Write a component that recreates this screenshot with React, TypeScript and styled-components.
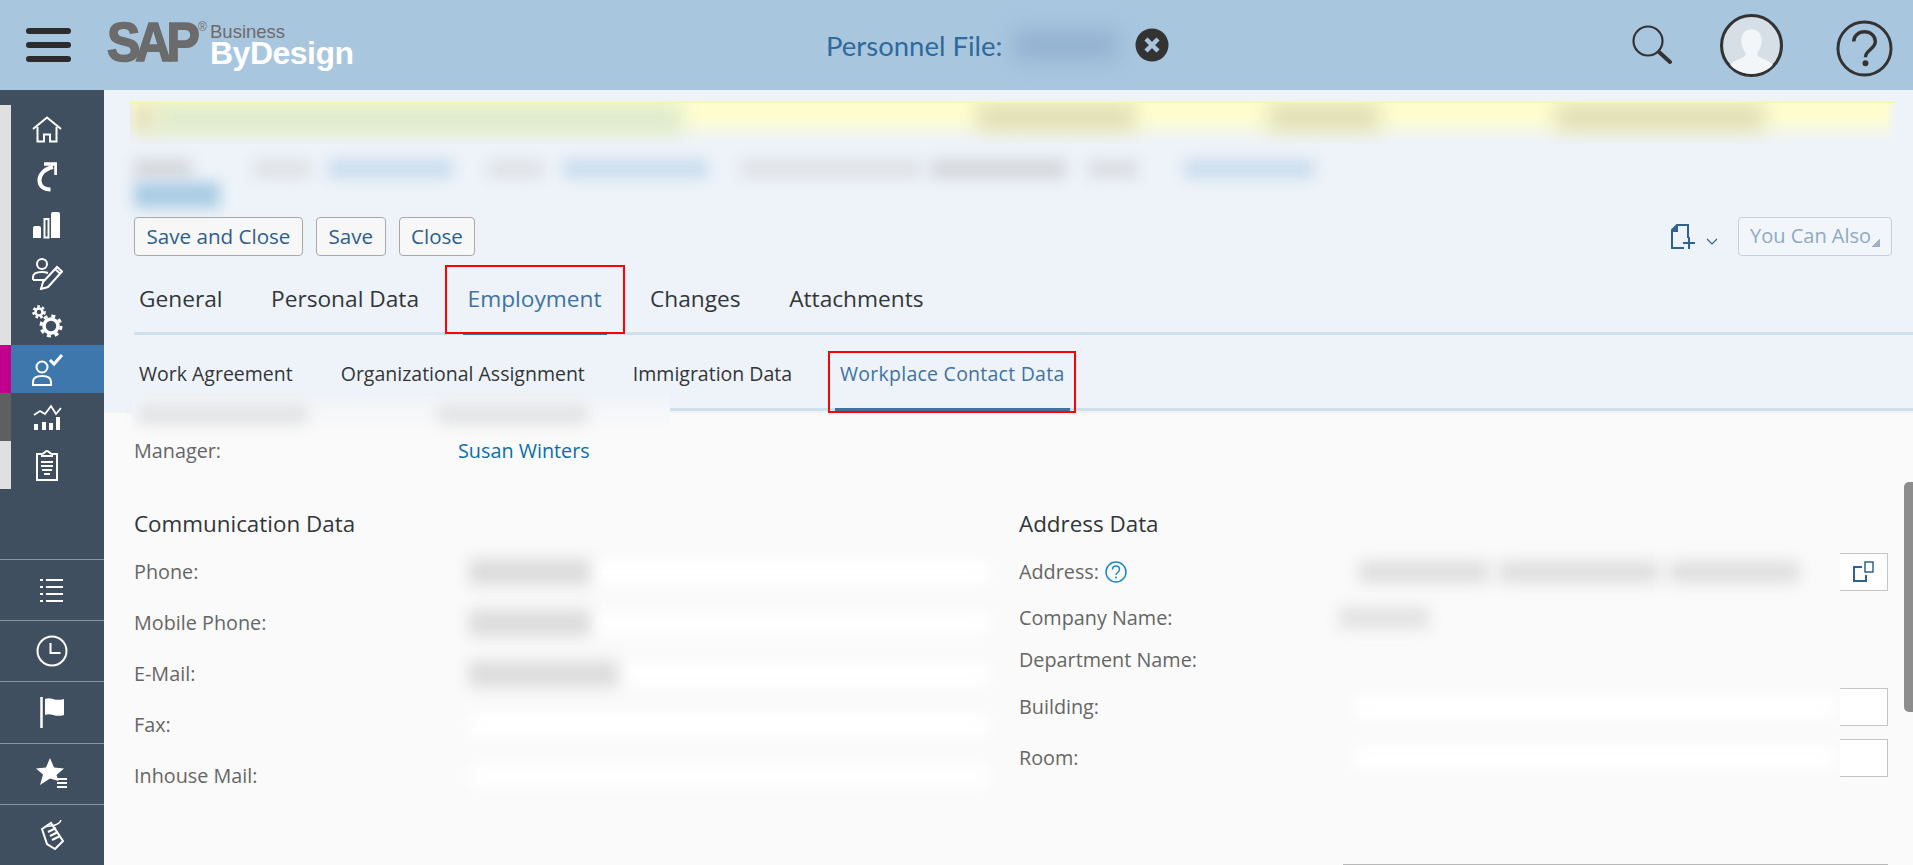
import React from 'react';
import styled, { createGlobalStyle } from 'styled-components';

const GlobalStyle = createGlobalStyle`
  html, body {
    margin: 0;
    padding: 0;
    height: 100%;
    overflow: hidden;
    background: #fafafa;
    font-family: 'Open Sans', 'Noto Sans', sans-serif;
  }
`;

const Icon = ({ w, h, children }: { w: number; h: number; children: React.ReactNode }) => (
  <svg width={w} height={h} viewBox={`0 0 ${w} ${h}`} fill="none" stroke="#fff" strokeWidth={2}>
    {children}
  </svg>
);

const topNav = [
  {
    rail: '#e0e0e0',
    icon: (
      <Icon w={30} h={27}>
        <path d="M1 13 15 1.5 29 13" />
        <path d="M5.500 11v14.500H12v-7h6v7h6.500V11" />
      </Icon>
    ),
  },
  {
    rail: '#e0e0e0',
    icon: (
      <Icon w={20} h={30}>
        <path d="M16 5C7 7 2 13 2.500 19c.5 5.500 5 8.500 11 8.500" strokeWidth={4} />
        <path d="M7 2h12v11" strokeWidth={3.500} />
      </Icon>
    ),
  },
  {
    rail: '#e0e0e0',
    icon: (
      <Icon w={28} h={28}>
        <path d="M0 27V17q0-2 2-2h4q2 0 2 2v10zM18 27V3q0-2 2-2h5q2 0 2 2v24z" fill="#fff" stroke="none" />
        <rect x="11.500" y="8" width="4" height="18.500" strokeWidth={2} />
      </Icon>
    ),
  },
  {
    rail: '#e0e0e0',
    icon: (
      <Icon w={31} h={33}>
        <circle cx="10" cy="7" r="5" />
        <path d="M1 23v-3c0-3 3-5 9-5 2 0 4 .3 6 1M1 23h12" />
        <path d="M9 32l2-7L25 10l5 4.500L16 30zM23 12l5 4.500" />
      </Icon>
    ),
  },
  {
    rail: '#e0e0e0',
    icon: (
      <Icon w={31} h={33}>
        <circle cx="7" cy="7" r="3.500" strokeWidth={2.500} />
        <circle cx="7" cy="7" r="5.500" strokeWidth={2.500} strokeDasharray="2.600 2.100" />
        <circle cx="19" cy="21" r="7" strokeWidth={3.500} />
        <circle cx="19" cy="21" r="10" strokeWidth={3} strokeDasharray="4 3.850" />
      </Icon>
    ),
  },
  {
    rail: '#c0008c',
    active: true,
    icon: (
      <Icon w={31} h={33}>
        <circle cx="10" cy="14" r="5.500" />
        <path d="M1 32v-3c0-4 3-6 9-6s9 2 9 6v3z" />
        <path d="M18 7l4 4 8-9" strokeWidth={3} />
      </Icon>
    ),
  },
  {
    rail: '#5f5f5f',
    icon: (
      <Icon w={29} h={27}>
        <path d="M1 11l6-4 5 3 6-8 5 8 5-6" strokeWidth={1.800} />
        <path d="M1 20h4v6H1zM9 18h4v8H9zM16 19h4v7h-4zM23 13h4v13h-4z" fill="#fff" stroke="none" />
      </Icon>
    ),
  },
  {
    rail: '#e0e0e0',
    icon: (
      <Icon w={24} h={31}>
        <path d="M7 4H2v26h20V4h-5" />
        <path d="M7 6V4c2 0 3-3 5-3s3 3 5 3v2z" />
        <path d="M6 12h12M6 16h12M7 20h10M9 24h6" />
      </Icon>
    ),
  },
];

const bottomNav = [
  <Icon w={24} h={25} key="list">
    <path d="M6 2h17M6 9h17M6 16h17M6 23h17" strokeWidth={2.200} />
    <path d="M0 2h3M0 9h3M0 16h3M0 23h3" strokeWidth={2.200} />
  </Icon>,
  <Icon w={32} h={32} key="clock">
    <circle cx="16" cy="16" r="14.500" strokeWidth={2} />
    <path d="M14.500 8v10h10" strokeWidth={2} />
  </Icon>,
  <Icon w={25} h={31} key="flag">
    <path d="M1.500 0v31" strokeWidth={2.500} />
    <path d="M5 2c6-3 9 3 19 0v16c-9 3-13-3-19 0z" fill="#fff" stroke="none" />
  </Icon>,
  <Icon w={32} h={31} key="star">
    <path d="M14 0l4 9.500 10 1-7.500 6.500 2 6-8.500-2.500L4 27l3-10.500L0 10.500l10-1z" fill="#fff" stroke="none" />
    <path d="M21 21h10M21 25h10M21 29h10" strokeWidth={2} />
  </Icon>,
  <Icon w={24} h={33} key="tag">
    <path d="M2 11l9-6 12 18-8 8-8-5z" strokeWidth={2} />
    <path d="M8 14l8-4M10 18l8-4M12 22l8-4" strokeWidth={2} />
    <path d="M5 9c4-2 6 0 10-2 3-1 5-2 6-5" strokeWidth={1.500} />
  </Icon>,
];

const App = () => {
  return (
    <>
      <GlobalStyle />
      <Page>
        <Header>
          <Hamburger>
            <span />
            <span />
            <span />
          </Hamburger>
          <Logo>
            <LogoSap>SAP</LogoSap>
            <LogoReg>®</LogoReg>
            <LogoWords>
              <LogoBusiness>Business</LogoBusiness>
              <LogoByDesign>ByDesign</LogoByDesign>
            </LogoWords>
          </Logo>
          <Title>
            Personnel File:
            <Smudge $w={104} $h={32} $c="#94b3d2" $blur={10} $ml={12} />
            <CloseCircle>
              <svg width="34" height="34" viewBox="0 0 34 34">
                <circle cx="17" cy="17" r="16.500" fill="#333" />
                <path d="M11 11l12 12M23 11 11 23" stroke="#a9c6df" strokeWidth="4.500" />
              </svg>
            </CloseCircle>
          </Title>
          <HeaderIcons>
            <SearchIcon width="40" height="40" viewBox="0 0 40 40" fill="none" stroke="#333">
              <circle cx="16" cy="16" r="14.500" strokeWidth="2.200" />
              <path d="M27 27l11 10" strokeWidth="4" strokeLinecap="round" />
            </SearchIcon>
            <Avatar>
              <svg width="63" height="63" viewBox="0 0 62 62">
                <circle cx="31" cy="31" r="29.500" fill="#d6dfe6" stroke="#333" strokeWidth="3" />
                <path
                  d="M31 15c6 0 10 4 10 11 0 5-2 9-4 12v3c3 3 11 4 15 9-5 6-13 9-21 9s-16-3-21-9c4-5 12-6 15-9v-3c-2-3-4-7-4-12 0-7 4-11 10-11z"
                  fill="#f3f6f9"
                />
              </svg>
            </Avatar>
            <HelpCircle width="57" height="57" viewBox="0 0 58 58" fill="none" stroke="#333">
              <circle cx="29" cy="29" r="27" strokeWidth="3" />
              <path d="M18 22c0-6 5-10 11-10s11 4 11 10c0 8-10 8-10 16" strokeWidth="3.500" />
              <circle cx="30" cy="44" r="3" fill="#333" stroke="none" />
            </HelpCircle>
          </HeaderIcons>
        </Header>
        <Body>
          <Sidebar>
            <TopNav>
              {topNav.map((item, i) => (
                <NavItem key={i} $rail={item.rail} $active={item.active}>
                  {item.icon}
                </NavItem>
              ))}
            </TopNav>
            <BottomNav>
              {bottomNav.map((icon, i) => (
                <BottomItem key={i}>{icon}</BottomItem>
              ))}
            </BottomNav>
          </Sidebar>
          <Main>
            <TopSection>
              <Banner>
                <Smudge $w={22} $h={28} $c="#e0ddbb" $blur={9} />
                <Smudge $w={525} $h={30} $c="#dde9cd" $blur={10} />
                <Smudge $w={158} $h={26} $c="#dedcb4" $blur={10} $ml={296} />
                <Smudge $w={110} $h={26} $c="#dedcb4" $blur={10} $ml={134} />
                <Smudge $w={208} $h={26} $c="#dedcb4" $blur={10} $ml={177} />
              </Banner>
              <InfoRow>
                <Smudge $w={58} $h={20} $c="#d6d8dc" $blur={7} />
                <Smudge $w={56} $h={18} $c="#dfe1e5" $blur={7} $ml={62} />
                <Smudge $w={125} $h={20} $c="#cbdeee" $blur={7} $ml={18} />
                <Smudge $w={55} $h={18} $c="#dfe1e5" $blur={7} $ml={35} />
                <Smudge $w={145} $h={20} $c="#cbdeee" $blur={7} $ml={20} />
                <Smudge $w={180} $h={18} $c="#dfe1e5" $blur={7} $ml={33} />
                <Smudge $w={135} $h={20} $c="#d6d8dc" $blur={7} $ml={10} />
                <Smudge $w={50} $h={18} $c="#dbdde1" $blur={7} $ml={22} />
                <Smudge $w={130} $h={20} $c="#cbdeee" $blur={7} $ml={46} />
              </InfoRow>
              <Smudge $w={86} $h={26} $c="#a9cce4" $blur={7} />
              <Toolbar>
                <ToolButton>Save and Close</ToolButton>
                <ToolButton>Save</ToolButton>
                <ToolButton>Close</ToolButton>
                <ToolbarRight>
                  <svg width="26" height="26" viewBox="0 0 26 26" fill="none" stroke="#2f6291" strokeWidth="2">
                    <path d="M14 24H2V6l5-5h11v13" />
                    <path d="M2 7h5V2" fill="#2f6291" />
                    <path d="M13 19h12M19 13v12" />
                  </svg>
                  <svg width="12" height="7" viewBox="0 0 12 7" fill="none" stroke="#2f6291" strokeWidth="1.200">
                    <path d="M1 1l5 5 5-5" />
                  </svg>
                  <AlsoButton>You Can Also</AlsoButton>
                </ToolbarRight>
              </Toolbar>
              <Tabs>
                <Tab>General</Tab>
                <Tab>Personal Data</Tab>
                <Tab $active $marked>
                  Employment
                </Tab>
                <Tab>Changes</Tab>
                <Tab>Attachments</Tab>
              </Tabs>
              <SubTabs>
                <SubTab>Work Agreement</SubTab>
                <SubTab>Organizational Assignment</SubTab>
                <SubTab>Immigration Data</SubTab>
                <SubTab $active $marked>
                  Workplace Contact Data
                </SubTab>
              </SubTabs>
              <Redaction>
                <Smudge $w={170} $h={20} $c="#e3e4e6" $blur={7} $ml={6} />
                <Smudge $w={150} $h={20} $c="#e3e4e6" $blur={7} $ml={130} />
              </Redaction>
            </TopSection>
            <FormArea>
              <ManagerRow>
                <FieldLabel>Manager:</FieldLabel>
                <ManagerLink>Susan Winters</ManagerLink>
              </ManagerRow>
              <Columns>
                <Column>
                  <SectionTitle>Communication Data</SectionTitle>
                  <Row>
                    <FieldLabel>Phone:</FieldLabel>
                    <BlurField $text={122} />
                  </Row>
                  <Row>
                    <FieldLabel>Mobile Phone:</FieldLabel>
                    <BlurField $text={122} />
                  </Row>
                  <Row>
                    <FieldLabel>E-Mail:</FieldLabel>
                    <BlurField $text={150} />
                  </Row>
                  <Row>
                    <FieldLabel>Fax:</FieldLabel>
                    <BlurField />
                  </Row>
                  <Row>
                    <FieldLabel>Inhouse Mail:</FieldLabel>
                    <BlurField />
                  </Row>
                </Column>
                <Column>
                  <SectionTitle>Address Data</SectionTitle>
                  <Row>
                    <FieldLabel>
                      Address:
                      <HelpIcon>
                        <svg width="22" height="22" viewBox="0 0 22 22" fill="none" stroke="#1b87c9">
                          <circle cx="11" cy="11" r="10" strokeWidth="1.500" />
                          <path d="M7.500 8.500c0-2 1.500-3.500 3.500-3.500s3.500 1.500 3.500 3.500c0 3-3.500 3-3.500 5.500" strokeWidth="1.500" />
                          <circle cx="11" cy="16.500" r="1" fill="#1b87c9" stroke="none" />
                        </svg>
                      </HelpIcon>
                    </FieldLabel>
                    <InputField>
                      <Smudge $w={130} $h={20} $c="#dcdcdc" $blur={8} $ml={20} />
                      <Smudge $w={160} $h={20} $c="#dcdcdc" $blur={8} $ml={10} />
                      <Smudge $w={130} $h={20} $c="#dcdcdc" $blur={8} $ml={10} />
                      <InputEnd>
                        <svg width="21" height="21" viewBox="0 0 21 21" fill="none" stroke="#2f6291" strokeWidth="2">
                          <path d="M9 6H1v14h12v-6" />
                          <rect x="12" y="1" width="8" height="10" strokeWidth="1.500" />
                        </svg>
                      </InputEnd>
                    </InputField>
                  </Row>
                  <Row $h={41}>
                    <FieldLabel>Company Name:</FieldLabel>
                    <Smudge $w={90} $h={20} $c="#e0e0e0" $blur={8} />
                  </Row>
                  <Row $h={43}>
                    <FieldLabel>Department Name:</FieldLabel>
                  </Row>
                  <Row>
                    <FieldLabel>Building:</FieldLabel>
                    <InputField>
                      <WhiteStrip />
                      <InputEnd />
                    </InputField>
                  </Row>
                  <Row>
                    <FieldLabel>Room:</FieldLabel>
                    <InputField>
                      <WhiteStrip />
                      <InputEnd />
                    </InputField>
                  </Row>
                </Column>
              </Columns>
              <BottomRule />
            </FormArea>
            <Scrollbar />
          </Main>
        </Body>
      </Page>
    </>
  );
};

export default App;

const Page = styled.div`
  display: flex;
  flex-direction: column;
  width: 1913px;
  height: 865px;
  overflow: hidden;
`;

const Header = styled.header`
  display: flex;
  align-items: center;
  flex: 0 0 90px;
  padding-left: 26px;
  background: #a9c6df;
`;

const Hamburger = styled.div`
  display: flex;
  flex-direction: column;
  gap: 8px;
  width: 45px;

  span {
    height: 6px;
    border-radius: 3px;
    background: #2c2c2e;
  }
`;

const Logo = styled.div`
  display: flex;
  align-items: flex-start;
  flex: 0 0 265px;
  margin-left: 36px;
  font-family: 'Liberation Sans', Arial, sans-serif;
`;

const LogoSap = styled.span`
  flex: 0 0 91px;
  min-width: 0;
  margin-top: -2px;
  color: #6b6b6b;
  font-size: 50px;
  font-weight: 700;
  line-height: 46px;
  letter-spacing: -5px;
  -webkit-text-stroke: 1.5px #6b6b6b;
  transform: scaleY(1.12);
`;

const LogoReg = styled.span`
  flex: 0 0 12px;
  color: #6b6b6b;
  font-size: 12px;
  line-height: 12px;
`;

const LogoWords = styled.div`
  display: flex;
  flex-direction: column;
  margin-top: 4px;
`;

const LogoBusiness = styled.span`
  color: #6b6b6b;
  font-size: 18.500px;
  line-height: 13px;
`;

const LogoByDesign = styled.span`
  color: #fff;
  font-size: 32px;
  font-weight: 700;
  line-height: 31px;
  letter-spacing: -0.5px;
`;

const Title = styled.div`
  display: flex;
  align-items: center;
  margin-left: 454px;
  color: #2f6a9b;
  font-family: 'Lato', sans-serif;
  font-size: 27.500px;
`;

const CloseCircle = styled.span`
  display: flex;
  margin-left: 17px;
`;

const HeaderIcons = styled.div`
  display: flex;
  align-items: center;
  margin-left: auto;
  padding-right: 20px;
`;

const SearchIcon = styled.svg`
  margin-right: 48px;
`;

const Avatar = styled.span`
  display: flex;
  margin-right: 53px;
`;

const HelpCircle = styled.svg`
  margin-top: 6px;
`;

const Body = styled.div`
  display: flex;
  flex: 1;
  min-height: 0;
`;

const Sidebar = styled.nav`
  display: flex;
  flex-direction: column;
  flex: 0 0 104px;
  background: #3f4f5f;
`;

const TopNav = styled.div`
  margin-top: 15px;
`;

const NavItem = styled.div<{ $rail: string; $active?: boolean }>`
  display: flex;
  align-items: center;
  justify-content: center;
  box-sizing: border-box;
  width: 104px;
  height: 48px;
  padding-right: 21px;
  border-left: 11px solid ${({ $rail }) => $rail};
  background: ${({ $active }) => ($active ? '#3e77ab' : 'transparent')};
`;

const BottomNav = styled.div`
  margin-top: auto;
`;

const BottomItem = styled.div`
  display: flex;
  align-items: center;
  justify-content: center;
  box-sizing: border-box;
  height: 61.200px;
  border-top: 1px solid #8b949d;
`;

const Main = styled.main`
  position: relative;
  display: flex;
  flex-direction: column;
  flex: 1;
  min-width: 0;
`;

const TopSection = styled.section`
  position: relative;
  z-index: 1;
  display: flex;
  flex-direction: column;
  align-items: flex-start;
  flex: 0 0 323px;
  box-sizing: border-box;
  padding: 12px 0 0 30px;
  background: #eef3f9;
`;

const Smudge = styled.div<{ $w: number; $h: number; $c: string; $blur: number; $ml?: number }>`
  flex: 0 0 auto;
  width: ${({ $w }) => $w}px;
  height: ${({ $h }) => $h}px;
  margin-left: ${({ $ml }) => $ml ?? 0}px;
  background: ${({ $c }) => $c};
  filter: blur(${({ $blur }) => $blur}px);
`;

const Banner = styled.div`
  display: flex;
  align-items: flex-start;
  box-sizing: border-box;
  width: 1766px;
  height: 42px;
  margin-left: -4px;
  padding: 1px 0 0 4px;
  background: linear-gradient(90deg, #eef3f9, transparent 4px, transparent 1756px, #eef3f9),
    linear-gradient(#fdfdd0 35%, #eef3f9 95%);
  border-top: 1px solid #f6f6a8;
  overflow: hidden;
`;

const InfoRow = styled.div`
  display: flex;
  align-items: center;
  height: 20px;
  margin: 15px 0 3px;
`;

const Toolbar = styled.div`
  display: flex;
  align-items: center;
  align-self: stretch;
  gap: 13px;
  margin-top: 9px;
  padding-right: 21px;
`;

const ToolButton = styled.button`
  box-sizing: border-box;
  height: 39px;
  padding: 0 11.500px 2px;
  border: 1px solid #a8a8a8;
  border-radius: 4px;
  background: #f7f7f7;
  color: #2c5f8f;
  font-family: inherit;
  font-size: 20.600px;
`;

const ToolbarRight = styled.div`
  display: flex;
  align-items: center;
  margin-left: auto;

  svg:nth-child(2) {
    margin: 10px 20px 0 10px;
  }
`;

const AlsoButton = styled.button`
  position: relative;
  box-sizing: border-box;
  width: 154px;
  height: 39px;
  padding: 0 0 2px 11px;
  border: 1px solid #c8cfd8;
  border-radius: 4px;
  background: #f2f5f9;
  color: #8eaac4;
  font-family: inherit;
  font-size: 20px;
  text-align: left;

  &::after {
    content: '';
    position: absolute;
    right: 11px;
    bottom: 8px;
    width: 8px;
    height: 8px;
    background: linear-gradient(135deg, transparent 50%, #9fb2c5 50%);
  }
`;

const Tabs = styled.div`
  display: flex;
  gap: 38.500px;
  align-self: stretch;
  height: 70px;
  margin-top: 9px;
  box-sizing: border-box;
  border-bottom: 3px solid #cfdfee;
`;

const Marked = `
  &::after {
    content: '';
    position: absolute;
    box-sizing: border-box;
    border: 2px solid #f00;
    pointer-events: none;
  }
`;

const Tab = styled.div<{ $active?: boolean; $marked?: boolean }>`
  position: relative;
  display: flex;
  align-items: center;
  height: 70px;
  padding: 0 5px;
  box-sizing: border-box;
  border-bottom: 3px solid ${({ $active }) => ($active ? '#3f72a3' : 'transparent')};
  color: ${({ $active }) => ($active ? '#3f72a3' : '#32363a')};
  font-size: 22.700px;
  ${({ $marked }) => ($marked ? Marked : '')}

  &::after {
    left: -18px;
    right: -18px;
    top: 0;
    bottom: -2px;
  }
`;

const SubTabs = styled.div`
  display: flex;
  gap: 38px;
  align-self: stretch;
  height: 76px;
  box-sizing: border-box;
  border-bottom: 3px solid #cfdfee;
`;

const SubTab = styled.div<{ $active?: boolean; $marked?: boolean }>`
  position: relative;
  display: flex;
  align-items: center;
  height: 76px;
  padding: 4px 5px 0;
  box-sizing: border-box;
  border-bottom: 3px solid ${({ $active }) => ($active ? '#3f72a3' : 'transparent')};
  color: ${({ $active }) => ($active ? '#3f72a3' : '#32363a')};
  font-size: 19.500px;
  letter-spacing: ${({ $active }) => ($active ? '0.25px' : '0')};
  ${({ $marked }) => ($marked ? Marked : '')}

  &::after {
    left: -7px;
    right: -6px;
    top: 16px;
    bottom: -5px;
  }
`;

const Redaction = styled.div`
  position: absolute;
  left: 28px;
  top: 306px;
  display: flex;
  align-items: center;
  width: 538px;
  height: 36px;
  background: linear-gradient(#f1f4f8, #fafafa);
`;

const FormArea = styled.section`
  position: relative;
  flex: 1;
  padding: 25px 0 0 30px;
  background: #fafafa;
`;

const ManagerRow = styled.div`
  display: flex;
  align-items: center;
  height: 24px;
`;

const FieldLabel = styled.div`
  display: flex;
  align-items: center;
  flex: 0 0 320px;
  color: #666;
  font-size: 19.800px;
`;

const ManagerLink = styled.a`
  margin-left: 4px;
  color: #0a6ea8;
  font-size: 19.800px;
`;

const Columns = styled.div`
  display: grid;
  grid-template-columns: 885px 1fr;
  margin-top: 47px;
`;

const Column = styled.div`
  display: flex;
  flex-direction: column;
`;

const SectionTitle = styled.div`
  height: 37px;
  color: #32363a;
  font-size: 22.400px;
  line-height: 30px;
`;

const Row = styled.div<{ $h?: number }>`
  display: flex;
  align-items: center;
  height: ${({ $h }) => $h ?? 51}px;
`;

const BlurField = styled.div<{ $text?: number }>`
  position: relative;
  width: 520px;
  height: 22px;
  margin-left: 15px;
  background: #fff;
  filter: blur(8px);

  &::before {
    content: '';
    position: absolute;
    left: 0;
    top: -2px;
    display: ${({ $text }) => ($text ? 'block' : 'none')};
    width: ${({ $text }) => $text}px;
    height: 26px;
    background: #dbdbdb;
  }
`;

const HelpIcon = styled.span`
  display: flex;
  margin-left: 6px;
`;

const InputField = styled.div`
  display: flex;
  align-items: center;
  width: 549px;
  height: 38px;
`;

const WhiteStrip = styled.div`
  flex: 1;
  height: 22px;
  margin: 0 4px 0 14px;
  background: #fff;
  filter: blur(8px);
`;

const InputEnd = styled.div`
  display: flex;
  align-items: center;
  justify-content: center;
  flex: 0 0 48px;
  box-sizing: border-box;
  height: 38px;
  margin-left: auto;
  border: 1px solid #c4c4c4;
  border-left: none;
  background: #fff;
`;

const BottomRule = styled.div`
  position: absolute;
  right: 25px;
  bottom: 0;
  width: 545px;
  height: 1px;
  background: #b8b8b8;
`;

const Scrollbar = styled.div`
  position: absolute;
  z-index: 2;
  right: 0;
  top: 392px;
  width: 9px;
  height: 230px;
  border-radius: 5px 0 0 5px;
  background: #8d8d8d;
`;
